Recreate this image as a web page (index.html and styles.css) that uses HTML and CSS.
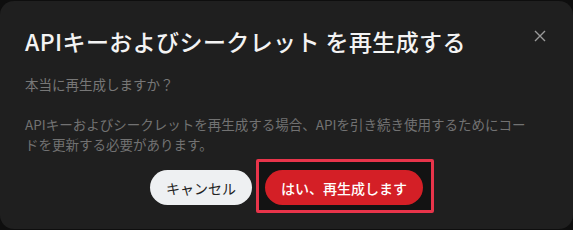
FILE: index.html
```html
<!DOCTYPE html>
<html lang="ja">
<head>
    <meta charset="UTF-8">
    <meta name="viewport" content="width=device-width, initial-scale=1.0">
    <title>APIキーおよびシークレット を再生成する</title>
    <link rel="stylesheet" href="styles.css">
</head>
<body>
    <div class="dialog">
        <div class="dialog-header">
            <h2 class="dialog-title">APIキーおよびシークレット を再生成する</h2>
            <button class="close-btn" aria-label="閉じる">
                <svg width="12" height="12" viewBox="0 0 12 12">
                    <path d="M1 1 L11 11 M11 1 L1 11" stroke="#9a9a9a" stroke-width="1.4" fill="none"/>
                </svg>
            </button>
        </div>

        <p class="question">本当に再生成しますか？</p>

        <p class="message">
            APIキーおよびシークレットを再生成する場合、APIを引き続き使用するためにコードを更新する必要があります。
        </p>

        <div class="actions">
            <button class="btn btn-cancel">キャンセル</button>
            <span class="highlight">
                <button class="btn btn-danger">はい、再生成します</button>
            </span>
        </div>
    </div>
</body>
</html>
```

FILE: styles.css
```css
html, body {
    margin: 0;
    padding: 0;
}

body {
    background: #0e0e0e;
    font-family: "Noto Sans CJK JP", "Noto Sans", sans-serif;
    width: 573px;
    height: 230px;
    overflow: hidden;
    padding-top: 1px;
    box-sizing: border-box;
}

.dialog {
    background: #1f1f1f;
    border-radius: 14px;
    height: 228px;
    box-sizing: border-box;
    padding: 25px 27px 0 25px;
}

.dialog-header {
    display: flex;
    align-items: flex-start;
    justify-content: space-between;
}

.dialog-title {
    margin: 0;
    font-size: 23px;
    line-height: 30px;
    font-weight: 500;
    color: #f3f3f3;
    letter-spacing: 0.4px;
}

.close-btn {
    background: none;
    border: none;
    padding: 0;
    margin-top: 4px;
    width: 12px;
    height: 12px;
    cursor: pointer;
    display: flex;
}

.question {
    margin: 18px 0 0;
    font-size: 13.5px;
    line-height: 20px;
    color: #777;
}

.message {
    margin: 20px 0 0;
    width: 510px;
    font-size: 13.5px;
    line-height: 20px;
    color: #727272;
}

.actions {
    display: flex;
    justify-content: center;
    gap: 13px;
    margin-top: 16px;
    padding-left: 2px;
}

.btn {
    height: 35px;
    padding: 0 16px;
    border: none;
    border-radius: 18px;
    font-family: inherit;
    font-size: 14px;
    cursor: pointer;
}

.btn-cancel {
    background: #eef0f2;
    color: #222;
    font-weight: 400;
}

.btn-danger {
    background: #d41f26;
    color: #fff;
    font-weight: 500;
}

.highlight {
    position: relative;
    display: inline-flex;
    isolation: isolate;
}

.highlight::before {
    content: "";
    position: absolute;
    top: -11px;
    bottom: -8px;
    left: -9px;
    right: -11px;
    border: 3px solid #e8344a;
    border-radius: 2px;
    background: #131313;
    z-index: -1;
}
```
